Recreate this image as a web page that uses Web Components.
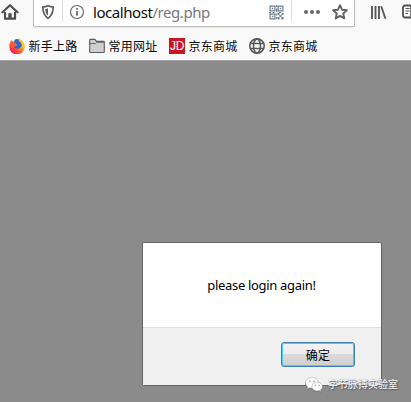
<!DOCTYPE html>
<html lang="zh"><head><meta charset="utf-8"><title>localhost/reg.php</title>
<style>html,body{margin:0;height:402px;overflow:hidden;background:#8b8b8b}</style></head>
<body><browser-window></browser-window>
<script>
const make=(name,html)=>customElements.define(name,class extends HTMLElement{
  constructor(){super();this.attachShadow({mode:'open'}).innerHTML=html;}
});

const icons={
home:['0 0 18 18','<path d="M1.500 9.300 9 2.200l7.500 7.100" fill="none" stroke="#4e4e50" stroke-width="2.200" stroke-linecap="round" stroke-linejoin="round"/><path d="M4 9v6.700h10V9" fill="none" stroke="#4e4e50" stroke-width="2.200" stroke-linejoin="round"/><path d="M7.300 16v-5.800h3.400V16z" fill="#4e4e50"/>'],
shield:['0 0 14 16','<path d="M7 1.700c1.700.8 3.300 1.100 5.200 1.100 0 5.600-.9 8.700-5.200 11.500C2.700 11.500 1.800 8.400 1.800 2.800 3.700 2.800 5.300 2.500 7 1.700z" fill="none" stroke="#606062" stroke-width="1.700" stroke-linejoin="round"/><path d="M7 4.300v7.500C4.900 10 4.300 8 4.200 5.100 5.300 5 6.100 4.700 7 4.300z" fill="#606062"/>'],
info:['0 0 16 16','<circle cx="8" cy="8" r="6.500" fill="none" stroke="#68686a" stroke-width="1.200"/><path d="M8 7v4.700" stroke="#606062" stroke-width="1.600"/><circle cx="8" cy="4.800" r="1" fill="#606062"/>'],
qr:['0 0 15 15','<g fill="none" stroke="#6f7d8b" stroke-width="1.200"><path d="M1.100 1.100h4.800v4.800H1.100zM9.100 1.100h4.800v4.800H9.100zM1.100 9.100h4.800v4.800H1.100z"/></g><g fill="#6f7d8b"><path d="M2.800 2.800h1.500v1.500H2.800zM10.800 2.800h1.500v1.500h-1.500zM2.800 10.800h1.500v1.500H2.800zM7 0h1.200v2H7zM7 3.500h1.200V7H7zM0 7h2v1.200H0zM3.500 7h2v1.200h-2zM8.500 8h2v2h-2zM12.500 8h2v2h-2zM10.500 10h2v2h-2zM8.500 12h2v2.500h-2zM12.500 12h2v2.500h-2zM6.900 8.500h1v2h-1zM6.900 12h1v2h-1zM10 7h2v1h-2z"/></g>'],
dots:['0 0 18 6','<g fill="#666668"><circle cx="3" cy="3" r="2"/><circle cx="9" cy="3" r="2"/><circle cx="15" cy="3" r="2"/></g>'],
star:['0 0 18 18','<path d="m9 2.200 2 4.500 4.900.5-3.700 3.300 1.100 4.900L9 12.900l-4.300 2.500 1.100-4.900-3.700-3.300 4.900-.5z" fill="none" stroke="#626264" stroke-width="1.900" stroke-linejoin="round"/>'],
library:['0 0 17 15','<path d="M2 1v13M5.500 1v13M9 1v13M11.200 1.200l4.300 12.600" fill="none" stroke="#58585a" stroke-width="1.900"/>'],
reader:['0 0 18 15','<rect x="1" y="1.500" width="16" height="12" rx="2" fill="none" stroke="#505052" stroke-width="1.800"/><path d="M9 2v11" stroke="#505052" stroke-width="1.500"/><path d="M3.500 4.500h4M3.500 7h4M3.500 9.500h2.500" stroke="#505052"/>'],
fox:['0 0 16 16','<defs><linearGradient id="a" x1="1" x2=".15" y2="1"><stop stop-color="#ffe226"/><stop offset=".4" stop-color="#ff9a1c"/><stop offset=".75" stop-color="#ff3a3d"/><stop offset="1" stop-color="#f0147c"/></linearGradient></defs><path d="M2.400 2.300 4 4l2-.2C7 2.500 8 1.200 9.500.5c-.2 1.300.8 1.700 2.300 2.500C14.500 4.500 16 6.500 15.600 9.300a7.600 7.600 0 0 1-15.200-.8C.3 6 1.300 3.600 2.400 2.300z" fill="url(#a)"/><path d="M5.900 1.500C8 .2 11 1 12.300 3.800c1.500 3-.1 6.400-3.500 6.900-2.300.3-4.200-.9-4.500-2.700 1 .6 2.200.5 3.300-.2l1-.9-2.500-1C5 5.700 4.500 4 5.900 1.500z" fill="#2f65ca"/><path d="M5 4.300 2.500 2.500 1.600 6c-.6 2.500 1 4.500 3.400 4.700-1-.8-1-2-.5-2.500 1.300.6 2.600.4 3.500-.8-1.300.1-1.700-.4-1.700-1l1-1z" fill="#ff5a2c"/><path d="M9.500.5c3.300.8 6.200 4 6.100 7.500-.5 1.500-1.300 2.500-2.200 3 .4-4-.8-5.600-2.400-7C10 3 9.300 2 9.500.5z" fill="#ffc722"/>'],
folder:['0 0 16 16','<path d="M.7 13.800V2.200q0-.8.800-.8h4.400l1.500 2h7.100q.8 0 .8.800v9.600q0 .7-.8.700h-13q-.8 0-.8-.7z" fill="#cfcfd0" stroke="#59595b" stroke-width="1.100"/><path d="M1 5.600h5.500l1.300-1.300h7" fill="none" stroke="#6a6a6c"/>'],
globe:['0 0 16 16','<g fill="none" stroke="#58585a" stroke-width="1.600"><circle cx="8" cy="8" r="7.200"/><ellipse cx="8" cy="8" rx="3.500" ry="7"/><path d="M1.500 5.500h13M1.500 10.500h13"/></g>'],
wechat:['0 0 18 15','<g fill="#fff" stroke="#9b9b9b" stroke-width=".5"><path d="M6.900.6C3.200.6.500 2.900.500 5.800c0 1.700.9 3.100 2.300 4l-.5 2 2.300-1.100c.7.200 1.500.3 2.300.3 3.600 0 6.400-2.300 6.400-5.200S10.500.6 6.900.6z"/><path d="M12.200 5.200c-3 0-5.300 1.900-5.300 4.300s2.300 4.400 5.300 4.400c.6 0 1.200-.1 1.800-.3l1.900 1-.4-1.700c1.200-.8 2-2 2-3.400 0-2.400-2.300-4.300-5.300-4.300z"/></g><g fill="#999"><circle cx="4.800" cy="4.300" r=".8"/><circle cx="9" cy="4.300" r=".8"/><circle cx="10.500" cy="8.300" r=".7"/><circle cx="14" cy="8.300" r=".7"/></g>']
};
customElements.define('ui-icon',class extends HTMLElement{
  constructor(){super();this.attachShadow({mode:'open'});}
  connectedCallback(){const [box,art]=icons[this.getAttribute('name')];
    this.shadowRoot.innerHTML=`<style>:host{display:block;flex:none;width:16px;height:16px}svg{display:block;width:100%;height:100%}</style><svg viewBox="${box}">${art}</svg>`;}
});

make('book-mark',`<style>:host{display:flex;align-items:center;width:80px;flex:none;gap:3.500px;font:12px/18px "Noto Sans CJK SC",sans-serif;letter-spacing:.25px;white-space:nowrap;color:#0c0c0d}</style><slot name="icon"></slot><span><slot></slot></span>`);
make('jd-logo',`<style>:host{display:flex;width:16px;height:16px;flex:none;background:#c91623;color:#fff;align-items:center;justify-content:center;font:12px/16px "Liberation Sans",sans-serif;letter-spacing:-.3px}</style><span>JD</span>`);
make('address-bar',`<style>
:host{display:flex;box-sizing:border-box;width:322px;height:27px;background:#fff;border:1px solid #bcbcbd;border-top:0;border-radius:0 0 2px 2px;padding-left:7px;align-items:center;box-shadow:0 1px 2px #0001;flex:none}
i{width:1px;height:22px;background:#dedede;align-self:flex-start;flex:none}
.s{width:14px;margin-right:7px}.n{margin:0 8px 2px 6px}.s{margin-bottom:2px}
p{margin:0 0 2px;width:176px;font:15px/20px "Noto Sans",sans-serif;letter-spacing:-.44px;color:#0c0c0d;white-space:nowrap}em{font-style:normal;color:#77777a}
.q{width:15px;height:15px;margin:0 7px 2px 0}.d{width:18px;height:6px;margin:0 10px 2px 11px}.t{width:18px;height:18px;margin-bottom:2px}
</style><ui-icon class="s" name="shield"></ui-icon><i></i><ui-icon class="n" name="info"></ui-icon><p>localhost<em>/reg.php</em></p><ui-icon class="q" name="qr"></ui-icon><i></i><ui-icon class="d" name="dots"></ui-icon><ui-icon class="t" name="star"></ui-icon>`);
make('browser-toolbar',`<style>
:host{display:block;box-sizing:border-box;height:60px;background:#f9f9f9;overflow:hidden}
.nav{display:flex;height:33px}.home{width:18px;height:18px;margin:3px 14px 0 1px}.lib{width:17px;height:15px;margin:5px 15px 0}.read{width:18px;height:15px;margin-top:4px}
.marks{display:flex;padding:4px 0 0 9px}
</style><div class="nav"><ui-icon class="home" name="home"></ui-icon><address-bar></address-bar><ui-icon class="lib" name="library"></ui-icon><ui-icon class="read" name="reader"></ui-icon></div>
<div class="marks"><book-mark><ui-icon slot="icon" name="fox"></ui-icon>新手上路</book-mark><book-mark><ui-icon slot="icon" name="folder"></ui-icon>常用网址</book-mark><book-mark><jd-logo slot="icon"></jd-logo>京东商城</book-mark><book-mark><ui-icon slot="icon" name="globe"></ui-icon>京东商城</book-mark></div>`);
make('confirm-button',`<style>:host{display:block}button{box-sizing:border-box;display:block;width:74px;height:25px;padding:0;border:1px solid #3c7fb1;border-radius:3px;box-shadow:inset 0 0 0 1px #48cdf3;background:linear-gradient(#f2f2f2 0,#ebebeb 48%,#dadada 50%,#cfcfcf);font:12px/20px "Noto Sans CJK SC",sans-serif;letter-spacing:.2px;color:#000}</style><button><slot></slot></button>`);
make('alert-dialog',`<style>
:host{display:flex;flex-direction:column;box-sizing:border-box;width:240px;height:144px;background:#fff;border:1px solid #656565;border-radius:2px}
.m{height:84px;display:flex;align-items:center;justify-content:center;font:13px/18px "Noto Sans",sans-serif;color:#000;white-space:nowrap}
.m span{margin:0 1px 0 0;letter-spacing:-.32px}
.f{flex:1;background:#f0f0f0;border-top:1px solid #dfdfdf;display:flex;align-items:flex-start;justify-content:flex-end;padding:14px 26px 0 0}
</style><div class="m"><span><slot></slot></span></div><div class="f"><confirm-button>确定</confirm-button></div>`);
make('account-mark',`<style>:host{position:absolute;left:305px;top:376px;display:flex;align-items:center;gap:5px;white-space:nowrap;color:#fff;font:10px/16px "Noto Sans CJK SC",sans-serif;text-shadow:1px 1px 1px #555,0 0 1px #777}ui-icon{width:18px;height:15px;filter:drop-shadow(0 1px .5px #777)}</style><ui-icon name="wechat"></ui-icon><span><slot></slot></span>`);
make('browser-window',`<style>
:host{display:block;width:411px;height:402px;position:relative;overflow:hidden;background:#8b8b8b}
main{height:342px;box-sizing:border-box;padding:181px 0 0 142px;border-top:1px solid #a6a6a6}
</style><browser-toolbar></browser-toolbar><main><alert-dialog>please login again!</alert-dialog></main><account-mark>字节脉搏实验室</account-mark>`);
</script></body></html>
